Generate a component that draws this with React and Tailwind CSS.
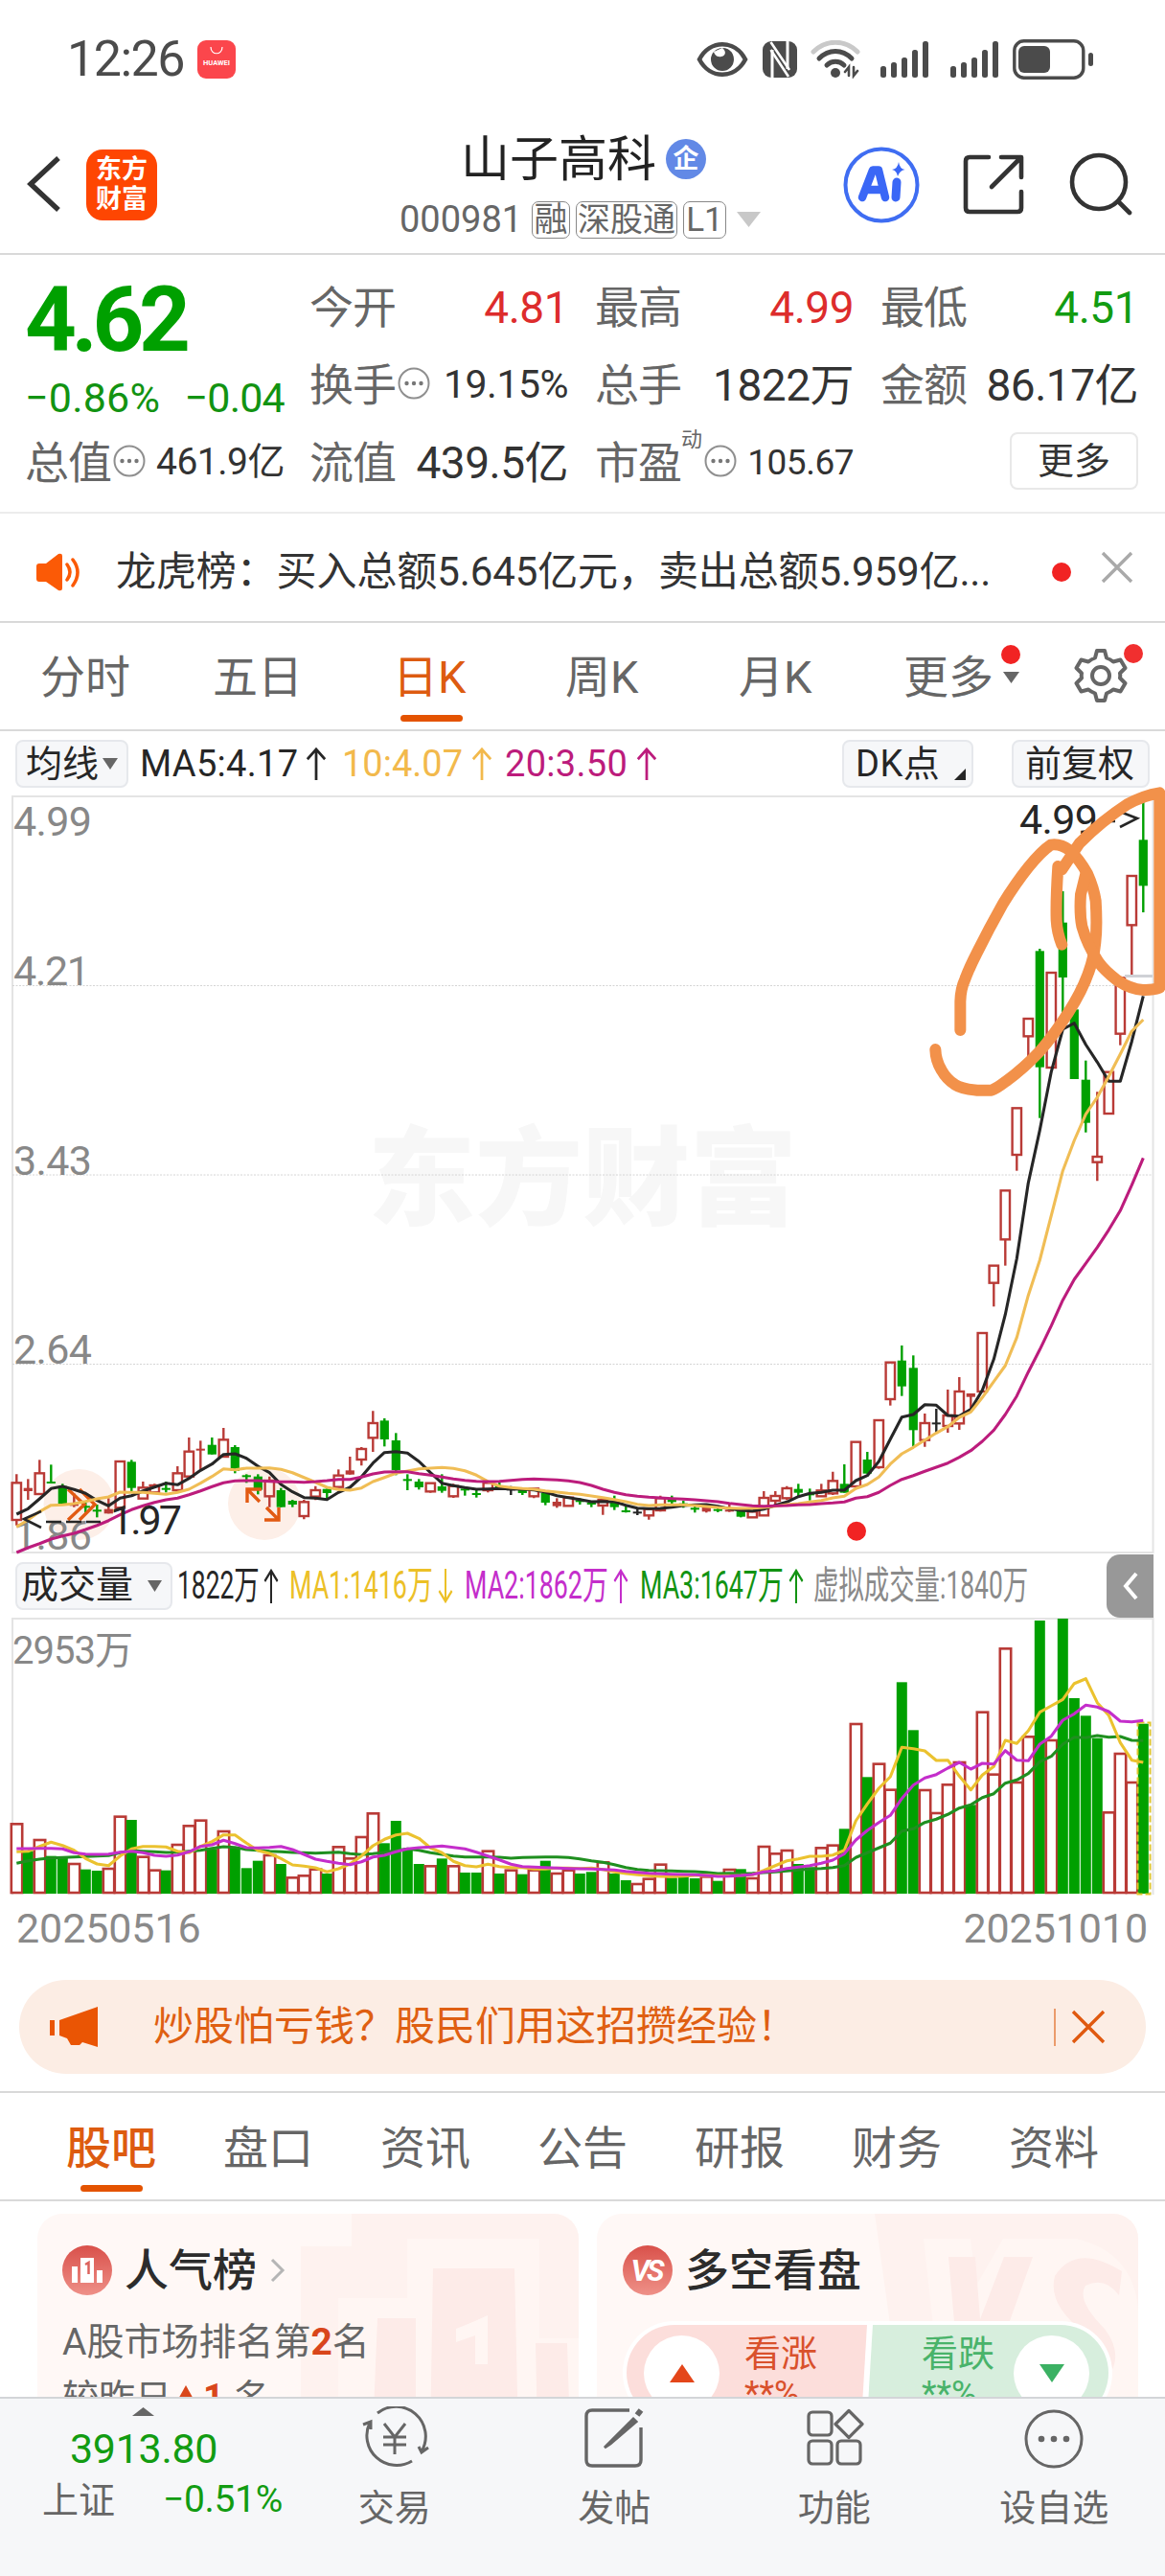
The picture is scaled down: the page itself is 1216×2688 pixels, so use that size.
import clsx from 'clsx';

const RED = '#b93a36';
const GREEN = '#00a000';
const BLACK = '#262626';

// every trading day takes a 12px slot
const xAt = (i) => 17.3 + i * 12;
// values are kept in thirds of a pixel below the base line of their block
const toY = (base, values) => values.map((v) => base + v / 3);
const block = (base, rows) => rows.map(([kind, ...v]) => [kind, ...toY(base, v)]);

// kind, high, body top, body bottom, low
const CANDLES = [
  ...block(1420, [
    ['r', 355, 382, 498, 515], ['R', 370, 398, 408, 435], ['r', 310, 352, 417, 417], ['g', 325, 378, 384, 384],
    ['g', 385, 392, 447, 447], ['R', 415, 448, 454, 458], ['g', 440, 454, 458, 475], ['g', 450, 466, 470, 490],
    ['R', 430, 464, 478, 478], ['r', 315, 315, 460, 460], ['g', 310, 316, 398, 408], ['r', 378, 397, 431, 431],
    ['r', 385, 390, 412, 415], ['g', 378, 398, 404, 412], ['r', 330, 352, 405, 405], ['r', 240, 284, 362, 362],
    ['R', 250, 275, 280, 340], ['g', 240, 263, 293, 293], ['r', 210, 247, 300, 300], ['g', 264, 270, 345, 352],
    ['g', 355, 358, 363, 382], ['g', 355, 362, 404, 418], ['r', 362, 375, 424, 458], ['g', 398, 405, 458, 458],
    ['g', 435, 438, 450, 458], ['r', 435, 442, 486, 496], ['r', 392, 405, 425, 436], ['g', 400, 401, 414, 432],
    ['r', 340, 359, 395, 395], ['R', 300, 343, 356, 356], ['r', 270, 276, 309, 328], ['r', 157, 195, 241, 285],
    ['g', 180, 187, 246, 268], ['g', 226, 249, 342, 358], ['g', 355, 370, 375, 405], ['g', 370, 378, 396, 403],
    ['r', 383, 383, 409, 413], ['g', 355, 393, 407, 413], ['r', 385, 392, 424, 429], ['g', 393, 400, 406, 422],
    ['g', 405, 414, 419, 428], ['r', 382, 382, 405, 412], ['g', 378, 390, 396, 405], ['k', 392, 400, 404, 420],
    ['g', 400, 404, 414, 420], ['r', 398, 400, 424, 430], ['g', 412, 414, 444, 452], ['R', 430, 441, 455, 460],
    ['r', 425, 428, 454, 454], ['g', 430, 436, 440, 450], ['g', 438, 444, 450, 458], ['r', 430, 435, 453, 482],
    ['g', 422, 443, 458, 467], ['g', 450, 468, 472, 475], ['k', 460, 472, 476, 483], ['r', 462, 464, 484, 497],
    ['r', 422, 430, 468, 472], ['g', 422, 434, 442, 448], ['g', 438, 446, 450, 460], ['g', 455, 460, 466, 475],
    ['R', 455, 458, 472, 475], ['g', 455, 464, 468, 474], ['R', 450, 466, 470, 473], ['g', 468, 468, 488, 490],
    ['r', 470, 472, 490, 490], ['r', 408, 429, 484, 484], ['r', 408, 423, 438, 450], ['r', 392, 399, 430, 436],
    ['g', 385, 401, 413, 425], ['g', 400, 415, 419, 437],
  ]),
  ...block(1200, [
    ['r', 1045, 1066, 1084, 1084], ['r', 1007, 1036, 1075, 1080], ['g', 984, 1045, 1073, 1073],
    ['r', 914, 914, 1053, 1053], ['g', 945, 969, 1013, 1013], ['r', 846, 846, 993, 998],
    ['r', 665, 665, 780, 800], ['g', 612, 659, 740, 770], ['g', 643, 682, 877, 928],
    ['r', 825, 855, 908, 929], ['k', 810, 853, 857, 885], ['r', 750, 831, 864, 885],
    ['r', 711, 756, 856, 876], ['R', 762, 762, 773, 810], ['r', 573, 573, 756, 756],
    ['r', 362, 362, 416, 490], ['r', 127, 127, 280, 362],
  ]),
  ...block(800, [
    ['r', 1069, 1069, 1215, 1265], ['r', 789, 789, 844, 915], ['g', 570, 577, 941, 1100],
    ['r', 645, 645, 942, 942], ['g', 390, 488, 660, 780], ['g', 760, 760, 978, 978],
    ['g', 920, 980, 1115, 1145], ['r', 1018, 1221, 1238, 1297], ['r', 956, 956, 1086, 1086],
    ['r', 661, 661, 836, 872], ['r', 342, 342, 496, 655], ['g', 110, 229, 373, 456],
  ]),
];

const MA5 = [
  ...toY(1420, [
    480, 463, 432, 400, 393, 403, 415, 437, 454, 430, 422, 407, 395, 383, 388, 368, 343, 323, 293, 291, 305, 330, 350,
    387, 410, 428, 430, 434, 412, 396, 363, 320, 287, 284, 289, 315, 350, 383, 391, 397, 402, 401, 400, 401, 402, 404,
    411, 422, 428, 434, 441, 440, 441, 452, 461, 463, 462, 458, 453, 451, 450, 455, 463, 468, 470, 464, 452, 442, 425, 415,
  ]),
  ...toY(1200, [1072, 1065, 1065, 1035, 1019, 975, 905, 836, 828, 797, 799, 831, 833, 812, 752, 655, 515, 340]),
  ...toY(800, [1303, 1138, 955, 822, 803, 870, 925, 985, 985, 860, 718]),
];

const MA10 = [
  ...toY(1420, [
    520, 498, 472, 452, 451, 447, 440, 432, 426, 411, 412, 412, 415, 418, 412, 402, 383, 362, 338, 341, 336, 336, 335,
    340, 350, 365, 380, 396, 403, 405, 398, 378, 365, 352, 345, 338, 336, 334, 337, 344, 358, 378, 392, 397, 400, 402,
    407, 411, 415, 418, 423, 428, 434, 441, 449, 453, 451, 451, 451, 453, 456, 459, 461, 462, 461, 459, 455, 450, 447, 442,
  ]),
  ...toY(1200, [
    1097, 1089, 1084, 1060, 1047, 1024, 983, 951, 931, 908, 886, 866, 837, 820, 775, 725, 675, 587, 455, 345, 205,
  ]),
  ...toY(800, [1265, 1170, 1088, 1035, 970, 900, 828, 792]),
];

const MA20 = [
  ...toY(1420, [
    600, 585, 572, 558, 548, 540, 528, 515, 500, 482, 466, 454, 443, 435, 430, 419, 407, 394, 382, 376, 375, 375, 377,
    379, 379, 380, 378, 375, 371, 371, 364, 354, 348, 347, 347, 353, 358, 364, 370, 374, 377, 378, 377, 374, 371, 370,
    371, 373, 376, 381, 390, 402, 412, 419, 424, 427, 429, 431, 433, 435, 438, 441, 446, 450, 454, 455, 454, 453, 451, 450,
  ]),
  ...toY(1200, [
    1107, 1105, 1102, 1090, 1085, 1072, 1050, 1031, 1019, 1006, 993, 980, 962, 941, 912, 877, 828, 770, 695, 625, 550,
    470, 405, 355, 305, 250, 190, 110, 25,
  ]),
];

// bar tops, r = up day, g = down day
const VOLUMES = (
  'r670 g755 r720 g770 g775 r795 g812 g816 r810 r647 g657 r773 r815 g815 r735 r676 r659 g748 r693 g745 g808 g785 r768 ' +
  'g795 r838 r832 r812 g825 r742 r778 r711 r637 g730 g660 g748 g795 r802 g778 r802 g822 g822 r755 g825 r815 g827 r815 ' +
  'g785 r825 r815 g825 g820 r790 g825 g846 r858 r842 r797 g838 g835 g840 r835 g848 r813 g811 r840 r741 r763 r753 g795 ' +
  'g805 r745 r737 g685 r357 g523 r482 r563 g226 g376 r564 r636 r547 r477 g610 r320 r515 r121 r540 r397 g33 r408 g27 ' +
  'g276 g331 g401 r634 r450 r540 g356'
)
  .split(' ')
  .map((s) => [s[0], 1680 + Number(s.slice(1)) / 3]);

const VOL_MA1 = toY(1680, [
  757, 755, 740, 727, 737, 752, 778, 795, 800, 770, 748, 740, 740, 742, 755, 760, 740, 725, 704, 704, 730, 753, 762, 778,
  798, 802, 807, 820, 810, 795, 770, 738, 718, 704, 699, 715, 745, 760, 787, 800, 804, 796, 803, 806, 806, 811, 811, 808,
  808, 809, 808, 812, 820, 825, 829, 832, 834, 835, 833, 831, 830, 832, 832, 831, 829, 815, 800, 785, 779, 771, 771, 767,
  752, 660, 607, 558, 522, 430, 434, 441, 471, 470, 520, 563, 517, 490, 408, 418, 378, 320, 300, 280, 230, 215, 290, 330,
  415, 470, 477,
]);
const VOL_MA2 = toY(1680, [
  747, 747, 746, 746, 748, 760, 764, 765, 764, 758, 755, 760, 768, 771, 767, 757, 740, 735, 721, 731, 744, 745, 743, 740,
  750, 765, 780, 787, 793, 797, 788, 773, 768, 757, 748, 744, 742, 739, 743, 748, 758, 770, 782, 796, 803, 805, 806, 808,
  809, 810, 811, 812, 814, 818, 821, 824, 826, 827, 828, 829, 831, 834, 833, 831, 828, 820, 817, 809, 805, 800, 793, 783,
  763, 720, 690, 665, 643, 590, 548, 526, 515, 495, 477, 498, 480, 482, 440, 470, 472, 420, 395, 345, 325, 298, 304, 318,
  348, 350, 346,
]);
const VOL_MA3 = toY(1680, [
  793, 785, 780, 776, 775, 773, 772, 770, 769, 760, 753, 755, 757, 759, 758, 755, 752, 746, 741, 743, 750, 752, 755, 757,
  759, 760, 761, 760, 758, 763, 766, 763, 759, 753, 748, 752, 760, 765, 770, 773, 773, 773, 774, 777, 775, 774, 773, 773,
  775, 779, 785, 790, 797, 806, 812, 815, 816, 817, 818, 819, 821, 825, 824, 825, 824, 822, 820, 817, 814, 811, 809, 806,
  800, 775, 760, 745, 730, 692, 685, 665, 655, 640, 620, 610, 587, 575, 542, 532, 512, 475, 458, 420, 398, 400, 393, 398,
  396, 408, 409,
]);

function Line({ ys, color, width = 3.1 }) {
  return (
    <polyline
      points={ys.map((y, i) => `${xAt(i)},${y.toFixed(1)}`).join(' ')}
      fill="none"
      stroke={color}
      strokeWidth={width}
      strokeLinejoin="round"
    />
  );
}

function Candle({ i, data }) {
  const [kind, high, top, bottom, low] = data;
  const x = xAt(i);
  if (kind === 'r') {
    return (
      <g stroke={RED} strokeWidth="2.4" fill="none">
        <path d={`M${x} ${high}V${top}M${x} ${bottom}V${low}`} />
        <rect x={x - 4.7} y={top} width="9.4" height={Math.max(bottom - top, 1)} />
      </g>
    );
  }
  const color = kind === 'g' ? GREEN : kind === 'k' ? BLACK : RED;
  return (
    <g fill={color}>
      <rect x={x - 1.2} y={high} width="2.4" height={low - high} />
      <rect x={x - 4.6} y={top} width="9.2" height={Math.max(bottom - top, 2)} />
    </g>
  );
}

function Tri({ className, up }) {
  return (
    <svg viewBox="0 0 10 8" preserveAspectRatio="none" className={clsx('shrink-0', className)} fill="currentColor">
      <path d={up ? 'M5 0L10 8H0Z' : 'M0 0H10L5 8Z'} />
    </svg>
  );
}

function ArrowUp({ className, down }) {
  return (
    <svg
      viewBox="0 0 24 36"
      preserveAspectRatio="none"
      className={clsx('shrink-0', className, down && 'rotate-180')}
      fill="none"
      stroke="currentColor"
      strokeWidth="3"
    >
      <path d="M12 36V2M2 13L12 2L22 13" />
    </svg>
  );
}

function Dots() {
  return (
    <svg viewBox="0 0 34 34" className="w-[34px] h-[34px] shrink-0">
      <circle cx="17" cy="17" r="15.5" fill="none" stroke="#8f8f8f" strokeWidth="2" />
      <circle cx="9.5" cy="17" r="2.2" fill="#777" />
      <circle cx="17" cy="17" r="2.2" fill="#777" />
      <circle cx="24.5" cy="17" r="2.2" fill="#777" />
    </svg>
  );
}

function Signal() {
  return (
    <svg viewBox="0 0 50 38" className="w-[50px] h-[38px] shrink-0" fill="#4b4b4b">
      <rect x="0" y="26" width="6" height="12" rx="2.5" />
      <rect x="11" y="22" width="6" height="16" rx="2.5" />
      <rect x="22" y="17" width="6" height="21" rx="2.5" />
      <rect x="33" y="9" width="6" height="29" rx="2.5" />
      <rect x="44" y="0" width="6" height="38" rx="2.5" />
    </svg>
  );
}

function StatusBar() {
  return (
    <div className="flex items-center h-[124px] pl-[70px] text-[#4b4b4b]">
      <span className="w-[136px] text-[52px] tracking-[-1.5px]">12:26</span>
      <div className="w-10 h-10 rounded-[9px] bg-[#fb464c] flex flex-col items-center">
        <svg viewBox="0 0 14 8" className="w-[14px] h-2 mt-[7px]" fill="none" stroke="#fff" strokeWidth="1.2">
          <path d="M1 0C1 9 13 9 13 0" />
        </svg>
        <span className="mt-[5px] text-[7.5px] font-bold text-white">HUAWEI</span>
      </div>
      <svg viewBox="0 0 54 38" className="ml-[481px] w-[54px] h-[38px] shrink-0">
        <path d="M3 19C14 -2 40 -2 51 19C40 40 14 40 3 19Z" fill="none" stroke="#4b4b4b" strokeWidth="4.5" />
        <path d="M27 7a12 12 0 1 0 12 12c0-7-5-12-12-12c4 3 4 8-1 9c-5 1-7-2-8-5" fill="#4b4b4b" />
      </svg>
      <svg viewBox="0 0 38 38" className="ml-[14px] w-[38px] h-[38px] shrink-0">
        <rect x="1" y="0" width="36" height="38" rx="9" fill="#4b4b4b" />
        <path d="M11 38V9M27 0V29" fill="none" stroke="#fff" strokeWidth="3" />
        <path d="M9.500 1L29 30M9.500 9L28 37" stroke="#fff" strokeWidth="2.600" />
      </svg>
      <svg viewBox="0 0 52 40" className="ml-[13px] w-[52px] h-10 shrink-0" fill="none" strokeLinecap="round">
        <path d="M3 12C16 -1 36 -1 49 12" stroke="#c9c9c9" strokeWidth="5" />
        <path d="M9 19C19 9 33 9 43 19" stroke="#4b4b4b" strokeWidth="5" />
        <path d="M17 26C22 21 30 21 35 26" stroke="#4b4b4b" strokeWidth="5" />
        <circle cx="26" cy="34" r="5" fill="#4b4b4b" />
        <path d="M40 37V28L36 33M45 28V37L49 32" stroke="#4b4b4b" strokeWidth="2.6" />
      </svg>
      <div className="flex ml-[21px] gap-[23px]">
        <Signal />
        <Signal />
      </div>
      <svg viewBox="0 0 86 42" className="ml-[15px] w-[86px] h-[42px] shrink-0">
        <rect x="1.8" y="1.8" width="72" height="38.4" rx="10" fill="none" stroke="#4b4b4b" strokeWidth="3.4" />
        <rect x="6" y="7" width="33" height="28" rx="6" fill="#4b4b4b" />
        <rect x="79" y="14" width="5" height="14" rx="2.5" fill="#4b4b4b" />
      </svg>
    </div>
  );
}

function Header() {
  return (
    <div className="flex h-[142px] border-b-2 border-[#d9d9d9]">
      <svg viewBox="0 0 36 60" className="ml-[28px] mt-[38px] w-9 h-[60px] shrink-0" fill="none">
        <path d="M33 3L4 30L33 57" stroke="#333" strokeWidth="5.4" />
      </svg>
      <div className="ml-[26px] mt-8 w-[74px] h-[74px] shrink-0 rounded-[17px] bg-[#fe4602] text-white font-bold text-[27px] leading-[31px] flex flex-col items-center justify-center">
        <span>东方</span>
        <span>财富</span>
      </div>
      <div className="w-[716px] shrink-0 flex flex-col">
        <div className="flex items-center mt-[14px] h-14 ml-[317px]">
          <span className="text-[51px] text-[#222] w-[214px]">山子高科</span>
          <span className="w-[42px] h-[42px] rounded-full bg-[#6289e6] text-white font-bold text-[27px] flex items-center justify-center">
            企
          </span>
        </div>
        <div className="flex items-center mt-[13px] h-[44px] ml-[253px] text-[#666]">
          <span className="text-[38px] w-[138px]">000981</span>
          <span className="h-[39px] w-10 border-[1.5px] border-[#888] rounded-[7px] text-[35px] flex items-center justify-center">
            融
          </span>
          <span className="ml-[6px] h-[39px] w-[106px] border-[1.5px] border-[#888] rounded-[7px] text-[34px] flex items-center justify-center">
            深股通
          </span>
          <span className="ml-[6px] h-[39px] w-[45px] border-[1.5px] border-[#888] rounded-[7px] text-[35px] flex items-center justify-center">
            L1
          </span>
          <Tri className="ml-[11px] w-[25px] h-4 text-[#c8c8c8]" />
        </div>
      </div>
      <svg viewBox="0 0 80 80" className="mt-[29px] w-20 h-20 shrink-0">
        <circle cx="40" cy="40" r="37.5" fill="none" stroke="#3f6df2" strokeWidth="4" />
        <g fill="none" stroke="#3a67f6" strokeLinecap="round" strokeLinejoin="round">
          <path d="M20 53L31 24.500L37 24.500L44 53M25 45H41" strokeWidth="8.500" />
          <path d="M56 37L55 53" strokeWidth="9" />
        </g>
        <path d="M58 16Q59 23 64.500 24Q59 25 57 31Q56 25 51 24Q57 23 58 16Z" fill="#3a67f6" />
      </svg>
      <svg viewBox="0 0 64 64" className="ml-[45px] mt-[37px] w-16 h-16 shrink-0" fill="none" stroke="#333" strokeWidth="4.6">
        <path d="M27 3H7Q3 3 3 7V56Q3 60 7 60H57Q61 60 61 56V39" strokeLinecap="round" />
        <path d="M40 3H61V24M60 4L30 34" strokeLinecap="round" strokeLinejoin="round" />
      </svg>
      <svg viewBox="0 0 66 66" className="ml-[47px] mt-[35px] w-[66px] h-[66px] shrink-0" fill="none" stroke="#333" strokeWidth="4.6">
        <circle cx="31" cy="31" r="28" />
        <path d="M51 51L63 63" strokeLinecap="round" />
      </svg>
    </div>
  );
}

function Stat({ label, value, color = 'text-[#333]', size = 'text-[46px]', icon, sup }) {
  return (
    <div className="flex items-center justify-between h-[81px]">
      <div className="relative flex items-center text-[46px] text-[#666]">
        <span className="tracking-[-1px]">{label}</span>
        {sup && <span className="absolute left-[90px] -top-3 text-[22px]">{sup}</span>}
        {icon && <div className={clsx(sup ? 'ml-[24px]' : 'ml-[2px]', '-mt-1')}><Dots /></div>}
      </div>
      <span className={clsx('tracking-[-0.5px]', color, size)}>{value}</span>
    </div>
  );
}

function Quote() {
  return (
    <div className="flex h-[270px] pt-[14px] pl-[26px] border-b-2 border-[#ececec]">
      <div className="w-[271px] mr-[26px]">
        <div className="flex items-center h-[108px] text-[94px] font-bold text-[#00a000] tracking-[-5.4px]">4.62</div>
        <div className="flex items-center justify-between h-[54px] text-[43px] text-[#129312]">
          <span className="tracking-[0.2px]">−0.86%</span>
          <span className="tracking-[-0.8px]">−0.04</span>
        </div>
        <Stat label="总值" value="461.9亿" size="text-[39px]" icon />
      </div>
      <div className="w-[270px] mr-7">
        <Stat label="今开" value="4.81" color="text-[#dd2c2c]" />
        <Stat label="换手" value="19.15%" size="text-[41px]" icon />
        <Stat label="流值" value="439.5亿" />
      </div>
      <div className="w-[270px] mr-7">
        <Stat label="最高" value="4.99" color="text-[#dd2c2c]" />
        <Stat label="总手" value="1822万" />
        <Stat label="市盈" value="105.67" size="text-[37px]" icon sup="动" />
      </div>
      <div className="w-[269px]">
        <Stat label="最低" value="4.51" color="text-[#129c12]" />
        <Stat label="金额" value="86.17亿" />
        <div className="flex h-[81px] justify-end items-center">
          <span className="w-[134px] h-[60px] -mt-1 border-2 border-[#e8e8e8] rounded-lg text-[38px] text-[#333] flex items-center justify-center">
            更多
          </span>
        </div>
      </div>
    </div>
  );
}

function Notice() {
  return (
    <div className="flex items-center h-[114px] pt-[9px] border-b-2 border-[#d9d9d9]">
      <svg viewBox="0 0 48 40" className="ml-[37px] w-12 h-10 shrink-0" fill="#fb5a06">
        <path d="M1 14Q1 11 4 11H11L24 1Q28 0 28 3V37Q28 40 24 39L11 30H4Q1 30 1 27Z" />
        <path d="M33 12Q39 20 33 28M39 7Q49 20 39 34" fill="none" stroke="#fb5a06" strokeWidth="3.5" strokeLinecap="round" />
      </svg>
      <span className="ml-[36px] w-[977px] text-[42px] tracking-[-0.1px] text-[#333]">
        龙虎榜：买入总额5.645亿元，卖出总额5.959亿...
      </span>
      <span className="w-5 h-5 shrink-0 rounded-full bg-[#f12323]" />
      <svg viewBox="0 0 34 34" className="ml-[31px] -mt-[10px] w-[34px] h-[34px] shrink-0" stroke="#a9a9a9" strokeWidth="3.4">
        <path d="M2 2L32 32M32 2L2 32" />
      </svg>
    </div>
  );
}

const PERIODS = [
  { name: '分时', width: 'w-[180px]' },
  { name: '五日', width: 'w-[188px]' },
  { name: '日K', width: 'w-[180px]', active: true },
  { name: '周K', width: 'w-[181px]' },
  { name: '月K', width: 'w-[172px]' },
];

function PeriodTabs() {
  return (
    <div className="flex h-[113px] pl-[42px] border-b-2 border-[#d9d9d9] text-[47px] text-[#666]">
      {PERIODS.map((tab) => (
        <div key={tab.name} className={clsx('shrink-0 pt-[33px]', tab.width, tab.active && 'text-[#dd5b10]')}>
          {tab.name}
          {tab.active && <div className="mt-4 ml-[8px] w-[65px] h-[7px] rounded-full bg-[#e45300]" />}
        </div>
      ))}
      <div className="relative flex w-[178px] pt-[33px]">
        <span>更多</span>
        <Tri className="mt-[18px] ml-[10px] w-[17px] h-3" />
        <span className="absolute left-[102px] top-[23px] w-5 h-5 rounded-full bg-[#f12323]" />
      </div>
      <div className="relative pt-[27px]">
        <svg viewBox="0 0 56 56" className="w-14 h-14" fill="none" stroke="#666" strokeWidth="4" strokeLinejoin="round">
          <path d="M24 2H32L34 9.500Q38 11 41 13.500L48.500 11.500L53.500 20L48 25.500Q48.500 28 48 30.500L53.500 36L48.500 44.500L41 42.500Q38 45 34 46.500L32 54H24L22 46.500Q18 45 15 42.500L7.500 44.500L2.500 36L8 30.500Q7.500 28 8 25.500L2.500 20L7.500 11.500L15 13.500Q18 11 22 9.500Z" />
          <circle cx="28" cy="28" r="9" />
        </svg>
        <span className="absolute left-[52px] top-[22px] w-5 h-5 rounded-full bg-[#f12f2f]" />
      </div>
    </div>
  );
}

const CHIP = 'shrink-0 flex items-center border-2 border-[#e6e8ec] bg-[#f6f7f9] rounded-lg text-[38px] text-[#262626]';

function MaRow() {
  return (
    <div className="flex items-center h-[67px] pl-4 text-[38px]">
      <div className={clsx(CHIP, 'w-[118px] h-[50px] pl-[9px]')}>
        <span className="w-[80px]">均线</span>
        <Tri className="w-4 h-3 text-[#666]" />
      </div>
      <div className="flex items-center ml-[12px] w-[211px] text-[#262626]">
        <span className="w-[173px] tracking-[0.3px]">MA5:4.17</span>
        <ArrowUp className="w-[22px] h-[34px]" />
      </div>
      <div className="flex items-center w-[170px] text-[#f2b94c]">
        <span className="w-[135px]">10:4.07</span>
        <ArrowUp className="w-[22px] h-[34px]" />
      </div>
      <div className="flex items-center w-[352px] text-[#bc1c7c]">
        <span className="w-[137px] tracking-[0.3px]">20:3.50</span>
        <ArrowUp className="w-[22px] h-[34px]" />
      </div>
      <div className={clsx(CHIP, 'w-[137px] h-[50px] pl-[12px]')}>
        <span className="w-[103px] tracking-[0.5px]">DK点</span>
        <svg viewBox="0 0 12 12" className="w-3 h-3 mt-[22px]" fill="#262626">
          <path d="M12 0V12H0Z" />
        </svg>
      </div>
      <div className={clsx(CHIP, 'ml-[40px] w-[144px] h-[50px] pl-3')}>前复权</div>
    </div>
  );
}

function KChart() {
  return (
    <svg viewBox="0 830 1216 791" className="relative z-10 block w-[1216px] h-[791px] shrink-0 overflow-visible">
      <g className="font-['Noto_Sans_CJK_SC']" fill="#f7f7f7">
        <text x="384" y="1270" fontSize="112" fontWeight="900" textLength="448">东方财富</text>
      </g>
      <rect x="13" y="831" width="1190.500" height="789" fill="none" stroke="#e4e4e4" strokeWidth="2" />
      <path d="M13 1028.500H1203M13 1226H1203M13 1423.500H1203" stroke="#d4d4d4" strokeWidth="1" strokeDasharray="2 1.500" />
      <circle cx="82.500" cy="1570" r="37" fill="#fdefe8" />
      <circle cx="276" cy="1569" r="38" fill="#fdefe8" />
      <g fontSize="43" fill="#888">
        <text x="14" y="872" textLength="82">4.99</text>
        <text x="14" y="1028" textLength="80">4.21</text>
        <text x="14" y="1226" textLength="82">3.43</text>
        <text x="14" y="1423" textLength="82">2.64</text>
        <text x="14" y="1617" textLength="82">1.86</text>
      </g>
      {CANDLES.map((data, i) => (
        <Candle key={i} i={i} data={data} />
      ))}
      <path d="M1174 1018.500H1203" stroke="#cfd1d6" strokeWidth="3" />
      <g fill="none" stroke="#e25a12" strokeWidth="3.400">
        <path d="M71 1554L88 1570L71 1586M83 1554L99 1570L83 1586" />
        <path d="M258 1568V1554H273M258 1554L271 1567M291 1573V1586H276M291 1586L278 1573" />
      </g>
      <Line ys={MA5} color={BLACK} />
      <Line ys={MA10} color="#f0bd55" />
      <Line ys={MA20} color="#bc1c7c" />
      <g fill="none" stroke={BLACK} strokeWidth="2.600">
        <path d="M43 1577L25 1585L43 1594M48 1588H64M69 1588H85M90 1588H105" />
        <path d="M1148 857H1164M1169 847L1187 854L1169 863" />
      </g>
      <g fontSize="43" fill={BLACK}>
        <text x="115" y="1601" textLength="75">1.97</text>
        <text x="1064" y="870" textLength="82">4.99</text>
      </g>
      <circle cx="894" cy="1597.700" r="10" fill="#f12323" />
      <g
        transform="translate(900 800) scale(.33333)"
        fill="none"
        stroke="#f2914a"
        strokeWidth="36"
        strokeLinecap="round"
        strokeLinejoin="round"
      >
        <path d="M307 825V735Q308 695 322 665Q335 630 358 585Q395 510 440 430Q480 365 520 315Q560 265 590 245Q620 240 650 262Q680 290 705 335Q725 380 731 420Q736 500 730 550Q725 600 710 640Q690 700 645 770Q600 840 555 892Q505 945 450 985Q420 1008 405 1013H360Q310 1008 290 995Q265 980 248 950Q230 920 229 885" />
        <path d="M625 557Q610 520 608 480Q606 420 613 312L625 322L680 240Q750 170 830 118Q880 90 931 82V692Q910 700 880 699Q840 697 800 670Q760 640 740 612Q705 560 688 500Q680 460 684 400L700 335" />
      </g>
    </svg>
  );
}

const VOL_LEGEND = [
  { text: '1822万', cell: 'w-[90px]', scale: 'scale-x-[0.66]', gap: 'w-[117px]', color: 'text-[#262626]' },
  { text: 'MA1:1416万', cell: 'w-[155px]', scale: 'scale-x-[0.67]', gap: 'w-[183px]', color: 'text-[#ecc027]', down: true },
  { text: 'MA2:1862万', cell: 'w-[155px]', scale: 'scale-x-[0.67]', gap: 'w-[183px]', color: 'text-[#c42ecb]' },
  { text: 'MA3:1647万', cell: 'w-[155px]', scale: 'scale-x-[0.67]', gap: 'w-[181px]', color: 'text-[#129312]' },
];

function VolumeRow() {
  return (
    <div className="flex items-center h-[67px] pl-4">
      <div className={clsx(CHIP, 'w-[164px] h-[50px] pl-[4px]')}>
        <span className="w-[132px] text-[39px]">成交量</span>
        <Tri className="w-[15px] h-3 text-[#666]" />
      </div>
      <div className="flex items-center ml-[5px] text-[40px]">
        {VOL_LEGEND.map((item) => (
          <div key={item.text} className={clsx('flex items-center shrink-0', item.gap, item.color)}>
            <div className={clsx('shrink-0', item.cell)}>
              <span className={clsx('inline-block origin-left', item.scale)}>{item.text}</span>
            </div>
            <ArrowUp className="w-[16px] h-[36px]" down={item.down} />
          </div>
        ))}
        <div className="w-[306px] text-[#8a8a8a]">
          <span className="inline-block origin-left scale-x-[0.66]">虚拟成交量:1840万</span>
        </div>
      </div>
      <div className="w-[49px] h-[66px] shrink-0 rounded-l-[14px] bg-[#989898] flex items-center justify-center">
        <svg viewBox="0 0 16 30" className="w-4 h-[30px]" fill="none" stroke="#fff" strokeWidth="4">
          <path d="M14 2L3 15L14 28" />
        </svg>
      </div>
    </div>
  );
}

function VolumeChart() {
  return (
    <svg viewBox="0 1688 1216 290" className="block w-[1216px] h-[290px] shrink-0 overflow-visible">
      <path d="M13 1977V1689H1203.500V1977" fill="none" stroke="#e4e4e4" strokeWidth="2" />
      <text x="13" y="1736" fontSize="40" fill="#888" textLength="126">2953万</text>
      {VOLUMES.map(([kind, top], i) =>
        kind === 'g' ? (
          <rect key={i} x={xAt(i) - 5.5} y={top} width="11" height={1976 - top} fill={GREEN} />
        ) : (
          <rect key={i} x={xAt(i) - 5.5} y={top} width="11.4" height={1975 - top} fill="#fff" stroke={RED} strokeWidth="2.6" />
        )
      )}
      <rect x="1187.500" y="1797.500" width="13" height="179" fill="none" stroke="#e0c52c" strokeWidth="2" strokeDasharray="7 3" />
      <Line ys={VOL_MA3} color="#1f8f1f" />
      <Line ys={VOL_MA1} color="#ebc22f" />
      <Line ys={VOL_MA2} color="#c42ecb" />
    </svg>
  );
}

function Banner() {
  return (
    <div className="flex items-center mt-[25px] ml-5 w-[1176px] h-[98px] shrink-0 rounded-full bg-[#fcede4] text-[#df5f12]">
      <svg viewBox="0 0 52 42" className="ml-8 w-[52px] h-[42px] shrink-0" fill="#ea5504">
        <path d="M0 14H5V30H0ZM10 14L50 0V42L34 37L31 40H22L18 33L10 30Z" />
      </svg>
      <span className="ml-[56px] w-[940px] text-[42px]">炒股怕亏钱？股民们用这招攒经验！</span>
      <span className="w-[2px] h-[39px] bg-[#eb9b6b]" />
      <svg viewBox="0 0 36 36" className="ml-[16px] w-9 h-9" stroke="#e0590f" strokeWidth="3.4">
        <path d="M2 2L34 34M34 2L2 34" />
      </svg>
    </div>
  );
}

const SECTIONS = ['股吧', '盘口', '资讯', '公告', '研报', '财务', '资料'];

function SectionTabs() {
  return (
    <div className="flex gap-[70px] mt-[18px] h-[115px] shrink-0 pl-[69px] border-y-2 border-[#d9d9d9] text-[47px] text-[#666]">
      {SECTIONS.map((name, i) => (
        <div key={name} className={clsx('w-[94px] pt-[34px]', i === 0 && 'text-[#dd5b10] font-medium')}>
          {name}
          {i === 0 && <div className="mt-[15px] ml-[15px] w-[65px] h-[7px] rounded-full bg-[#e45300]" />}
        </div>
      ))}
    </div>
  );
}

function RankCard() {
  return (
    <div className="relative w-[565px] h-[230px] rounded-[26px] bg-[#fff8f6] overflow-hidden pl-[26px]">
      <svg viewBox="0 0 565 230" className="absolute inset-0 w-[565px] h-[230px]">
        <path d="M328 0H565V230H275V34H328Z" fill="#fef2ef" />
        <path d="M314 88H386V26H524V130H565V230H314Z" fill="#fff6f3" />
        <path d="M355 109H395V230H350ZM413 57H498L502 230H410ZM520 135H553L556 230H522Z" fill="#fdebe8" />
        <path d="M470 107V157H459V125H437V120Z" fill="#fff6f3" />
        <path d="M437 121L470 106V157H457V127L437 134Z" fill="#fff6f3" />
      </svg>
      <div className="relative flex items-center mt-[32px] h-[54px]">
        <svg viewBox="0 0 52 52" className="w-[52px] h-[52px]">
          <defs>
            <linearGradient id="badge" x1="0" y1="0" x2="0" y2="1">
              <stop offset="0" stopColor="#d9504a" />
              <stop offset="1" stopColor="#ee9088" />
            </linearGradient>
          </defs>
          <circle cx="26" cy="26" r="26" fill="url(#badge)" />
          <path d="M10 22H16V39H10ZM19 13H33V39H19ZM36 26H42V39H36Z" fill="#fff" />
          <path d="M24 20L27.500 18V30" fill="none" stroke="#dc625c" strokeWidth="2.500" />
        </svg>
        <span className="ml-[13px] text-[46px] font-medium text-[#2c2c2c]">人气榜</span>
        <svg viewBox="0 0 16 26" className="ml-[14px] w-4 h-[26px]" fill="none" stroke="#b5b5b5" strokeWidth="3">
          <path d="M2 2L13 13L2 24" />
        </svg>
      </div>
      <div className="relative flex items-center mt-[24px] h-[48px] text-[39px] text-[#666]">
        <span>A股市场排名第</span>
        <span className="font-bold text-[#d9461b]">2</span>
        <span>名</span>
      </div>
      <div className="relative flex items-center mt-[10px] h-[48px] text-[38px] text-[#666]">
        <span>较昨日</span>
        <Tri up className="ml-[5px] -mt-[8px] w-5 h-[18px] text-[#d9461b]" />
        <span className="ml-[8px] font-bold text-[#d9461b]">1</span>
        <span className="ml-[10px]">名</span>
      </div>
    </div>
  );
}

function VoteCard() {
  return (
    <div className="relative ml-[19px] w-[565px] h-[230px] rounded-[26px] bg-[#fff8f6] overflow-hidden">
      <svg viewBox="0 0 565 230" className="absolute inset-0 w-[565px] h-[230px]">
        <path d="M290 0H565V130H308Z" fill="#fef2ef" />
        <path d="M341 26H390L396 75L424 26H500Q560 40 565 100V200H360Z" fill="#fff6f3" />
        <path d="M367 45H395L400 110L425 45H455L410 170H378ZM548 60Q500 30 478 65Q470 95 510 125Q530 150 500 170H470V190H510Q560 160 530 120Q500 90 510 75Q530 65 545 85Z" fill="#fdebe8" />
      </svg>
      <div className="relative flex items-center mt-[32px] ml-[27px] h-[54px]">
        <div className="w-[52px] h-[52px] rounded-full bg-linear-to-b from-[#d9504a] to-[#ee9088] text-white text-[31px] font-bold italic tracking-[-3px] flex items-center justify-center pr-[3px]">
          VS
        </div>
        <span className="ml-[13px] text-[46px] font-medium text-[#2c2c2c]">多空看盘</span>
      </div>
      <div className="relative flex mt-[26px] ml-[27px] w-[511px] h-[108px] rounded-full bg-white p-1">
        <svg viewBox="0 0 505 100" preserveAspectRatio="none" className="absolute left-1 top-1 w-[503px] h-[100px]">
          <path d="M50 0H252L246 100H50A50 50 0 0 1 50 0Z" fill="#fcdedb" />
          <path d="M258 0H455A50 50 0 0 1 455 100H252Z" fill="#d7eedd" />
        </svg>
        <div className="relative flex w-full h-[100px] items-center text-[38px]">
          <div className="ml-[18px] w-[79px] h-[79px] rounded-full bg-white shrink-0 flex items-center justify-center text-[#e4461a]">
            <Tri up className="w-[26px] h-[19px]" />
          </div>
          <div className="ml-[26px] w-[185px] text-[#d9512c] flex flex-col gap-[5px]">
            <span>看涨</span>
            <span className="text-[36px]">**%</span>
          </div>
          <div className="w-[96px] text-[#49b36a] flex flex-col gap-[5px]">
            <span>看跌</span>
            <span className="text-[36px]">**%</span>
          </div>
          <div className="w-[79px] h-[79px] rounded-full bg-white shrink-0 flex items-center justify-center text-[#3bb163]">
            <Tri className="w-[26px] h-[19px]" />
          </div>
        </div>
      </div>
    </div>
  );
}

const ICON = 'w-[72px] h-[66px]';

const ACTIONS = [
  {
    name: '交易',
    icon: (
      <svg viewBox="0 0 72 66" className={ICON} fill="none" stroke="#666" strokeWidth="3">
        <path d="M18 7A31 31 0 0 1 64 47M54 57A31 31 0 0 1 10 17M3 19L11 16V24M71 43L64 48L61 42" />
        <path d="M25 18L36 32L47 18M24 32H48M24 40H48M36 32V50" />
      </svg>
    ),
  },
  {
    name: '发帖',
    icon: (
      <svg viewBox="0 0 72 66" className={ICON} fill="none" stroke="#666" strokeWidth="3.4">
        <path d="M52 4H13Q7 4 7 10V56Q7 62 13 62H58Q64 62 64 56V22" />
        <path d="M29 40L56 13L59 16L32 39L26 43Z" fill="#666" strokeWidth="3" />
        <path d="M60 9L64 4" strokeWidth="6" />
      </svg>
    ),
  },
  {
    name: '功能',
    icon: (
      <svg viewBox="0 0 72 66" className={ICON} fill="none" stroke="#666" strokeWidth="3.2">
        <rect x="9" y="6" width="24" height="24" rx="4" />
        <rect x="9" y="36" width="24" height="24" rx="4" />
        <rect x="39" y="36" width="24" height="24" rx="4" />
        <path d="M51 4.500L65 18.500L51 32.500L37 18.500Z" strokeLinejoin="round" />
      </svg>
    ),
  },
  {
    name: '设自选',
    icon: (
      <svg viewBox="0 0 72 66" className={ICON} fill="#666">
        <circle cx="36" cy="34" r="29" fill="none" stroke="#666" strokeWidth="3" />
        <circle cx="23" cy="34" r="3.300" />
        <circle cx="36" cy="34" r="3.300" />
        <circle cx="49" cy="34" r="3.300" />
      </svg>
    ),
  },
];

function BottomNav() {
  return (
    <div className="flex h-[187px] shrink-0 border-t-2 border-[#d3d5d8] bg-[#f6f7f9] text-[#666] text-[38px]">
      <div className="w-[298px] flex flex-col">
        <Tri up className="mt-[9px] ml-[138px] w-[23px] h-[9px]" />
        <span className="mt-[13px] ml-[73px] text-[43px] tracking-[-0.3px] text-[#129c12]">3913.80</span>
        <div className="flex items-center justify-between mt-[12px] ml-[44px] pr-[3px]">
          <span>上证</span>
          <span className="text-[39px] tracking-[-0.3px] text-[#129c12]">−0.51%</span>
        </div>
      </div>
      <div className="flex ml-[-1px]">
        {ACTIONS.map((item) => (
          <div key={item.name} className="w-[229.500px] flex flex-col items-center pt-[8px]">
            {item.icon}
            <span className="mt-[21px]">{item.name}</span>
          </div>
        ))}
      </div>
    </div>
  );
}

export default function App() {
  return (
    <div className="w-[1216px] h-[2688px] overflow-hidden flex flex-col bg-white leading-none whitespace-nowrap font-[Roboto,'Noto_Sans_CJK_SC',sans-serif]">
      <StatusBar />
      <Header />
      <Quote />
      <Notice />
      <PeriodTabs />
      <MaRow />
      <KChart />
      <VolumeRow />
      <VolumeChart />
      <div className="flex items-end justify-between h-[63px] shrink-0 pb-[7px] pl-[17px] pr-[18px] text-[43px] text-[#8a8a8a] tracking-[-0.1px]">
        <span>20250516</span>
        <span>20251010</span>
      </div>
      <Banner />
      <SectionTabs />
      <div className="flex pt-[13px] pl-[39px] h-[204px] shrink-0 overflow-hidden">
        <RankCard />
        <VoteCard />
      </div>
      <BottomNav />
    </div>
  );
}
